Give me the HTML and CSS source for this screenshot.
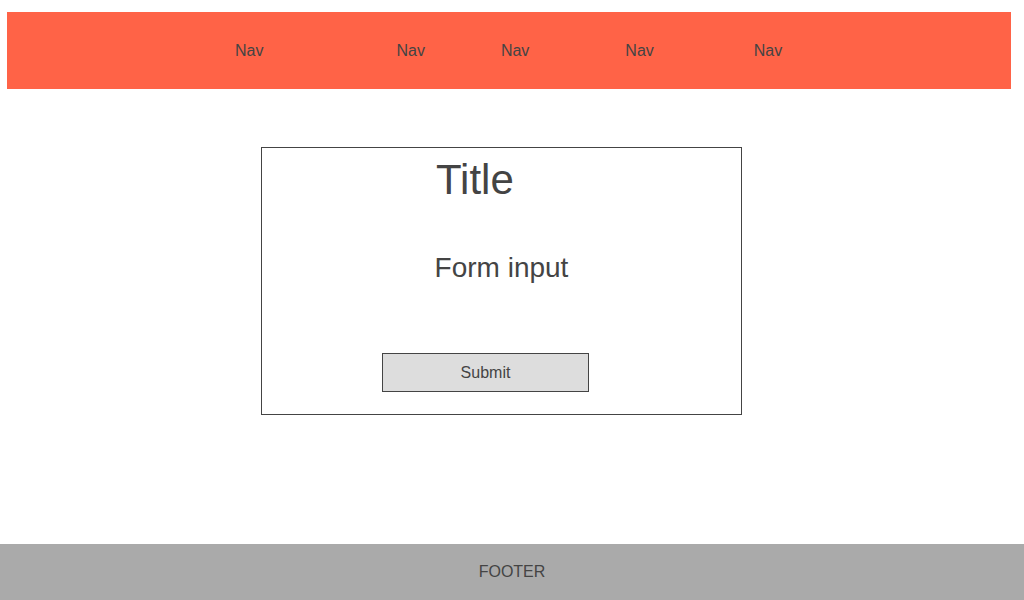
FILE: index.html
```html
<!DOCTYPE html>
<html>
<head>
<meta charset="utf-8">
<link rel="stylesheet" href="styles.css">
</head>
<body>
<header class="topbar">
  <span class="nav n1">Nav</span>
  <span class="nav n2">Nav</span>
  <span class="nav n3">Nav</span>
  <span class="nav n4">Nav</span>
  <span class="nav n5">Nav</span>
</header>
<main class="content">
  <section class="card">
    <h1 class="title">Title</h1>
    <div class="field">Form input</div>
    <button class="submit">Submit</button>
  </section>
</main>
<footer class="footer">FOOTER</footer>
</body>
</html>
```
FILE: styles.css
```css
html, body {
  margin: 0;
  padding: 0;
}
body {
  width: 1024px;
  height: 600px;
  display: flex;
  flex-direction: column;
  font-family: "Liberation Sans", Arial, sans-serif;
  color: #444;
  background: #fff;
  overflow: hidden;
}
.topbar {
  margin: 12px 13px 0 7px;
  height: 77px;
  background: #ff6347;
  display: flex;
  align-items: center;
  padding-left: 228px;
  font-size: 16px;
}
.nav { line-height: 18px; }
.n2 { margin-left: 133px; }
.n3 { margin-left: 76px; }
.n4 { margin-left: 96px; }
.n5 { margin-left: 100px; }
.content {
  flex: 1;
  padding-top: 58px;
}
.card {
  margin-left: 261px;
  width: 481px;
  height: 268px;
  box-sizing: border-box;
  border: 1px solid #444;
  display: flex;
  flex-direction: column;
}
.title {
  margin: 8px 0 0 174px;
  font-size: 42px;
  font-weight: normal;
  line-height: 48px;
}
.field {
  margin-top: 48px;
  text-align: center;
  font-size: 28px;
  line-height: 32px;
}
.submit {
  margin: 69px 0 0 120px;
  width: 207px;
  height: 39px;
  box-sizing: border-box;
  border: 1px solid #444;
  background: #ddd;
  color: #444;
  font-family: "Liberation Sans", Arial, sans-serif;
  font-size: 16px;
  padding: 0;
}
.footer {
  height: 56px;
  background: #aaa;
  display: flex;
  align-items: center;
  justify-content: center;
  font-size: 16px;
}
```
